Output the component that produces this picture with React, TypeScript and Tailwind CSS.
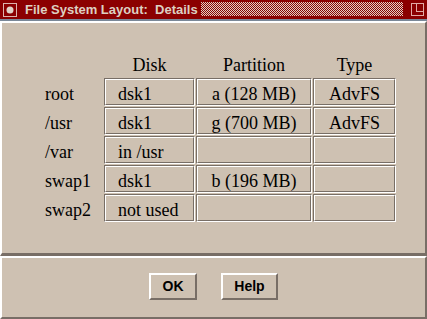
import React from "react"

const rows = [
  ["root", "dsk1", "a (128 MB)", "AdvFS"],
  ["/usr", "dsk1", "g (700 MB)", "AdvFS"],
  ["/var", "in /usr", "", ""],
  ["swap1", "dsk1", "b (196 MB)", ""],
  ["swap2", "not used", "", ""],
]

function Cell({ children, align = "center" }: { children?: React.ReactNode; align?: "left" | "center" }) {
  return (
    <div className="h-[28px] border border-t-[#786e66] border-l-[#786e66] border-b-white border-r-white">
      <div
        className={
          "h-full border border-t-white border-l-white border-b-[#786e66] border-r-[#786e66] pt-[4px] leading-[21px] whitespace-nowrap " +
          (align === "left" ? "pl-[12px] text-left" : "text-center")
        }
      >
        {children}
      </div>
    </div>
  )
}

function TitleBar() {
  return (
    <div className="flex h-[19px] items-start bg-[#8b0000]">
      <svg width="14" height="14" viewBox="0 0 14 14" className="ml-[3px] mt-[3px]" shapeRendering="crispEdges">
        <rect x="0.5" y="0.5" width="13" height="13" fill="none" stroke="#dcb4ac" />
        <circle cx="7" cy="7" r="3.5" fill="#e0d4c8" shapeRendering="auto" />
      </svg>
      <span className="ml-[8px] w-[176px] font-[Liberation_Sans,Arial,sans-serif] text-[13px] font-bold leading-[19px] whitespace-nowrap text-[#ddd0c2]">
        File System Layout:&nbsp; Details
      </span>
      <svg width="202" height="14" className="mt-[2px]" shapeRendering="crispEdges">
        <defs>
          <pattern id="chk" width="2" height="2" patternUnits="userSpaceOnUse">
            <rect width="2" height="2" fill="#8b0000" />
            <rect width="1" height="1" fill="#e0d0c4" />
            <rect x="1" y="1" width="1" height="1" fill="#e0d0c4" />
          </pattern>
        </defs>
        <rect width="202" height="14" fill="url(#chk)" />
      </svg>
      <svg width="13" height="13" viewBox="0 0 13 13" className="ml-[8px] mt-[3px]" shapeRendering="crispEdges">
        <rect x="0.5" y="0.5" width="12" height="12" fill="none" stroke="#e2aaa4" />
        <path d="M5.5 1 V8.5 H12" fill="none" stroke="#e2aaa4" />
      </svg>
    </div>
  )
}

export default function App() {
  return (
    <div className="h-[319px] w-[427px] overflow-hidden bg-[#cec1b2] font-[Liberation_Serif,Times_New_Roman,serif] text-[18px] text-black">
      <TitleBar />
      <div className="h-[2px] bg-[#7a8898]" />
      <div className="h-[235px] border-b-[3px] border-l-2 border-r-2 border-t-2 border-b-[#786e66] border-l-white border-r-[#786e66] border-t-white pl-[43px] pt-[32px]">
        <div className="grid grid-cols-[58px_91px_116px_83px] gap-[1px]">
          <div className="h-[22px]" />
          <div className="h-[22px] text-center leading-[21px]">Disk</div>
          <div className="h-[22px] text-center leading-[21px]">Partition</div>
          <div className="h-[22px] text-center leading-[21px]">Type</div>
          {rows.map(([label, disk, part, type]) => (
            <React.Fragment key={label}>
              <div className="h-[28px] pt-[6px] leading-[21px]">{label}</div>
              <Cell align="left">{disk}</Cell>
              <Cell>{part}</Cell>
              <Cell>{type}</Cell>
            </React.Fragment>
          ))}
        </div>
      </div>
      <div className="flex h-[63px] justify-center gap-6 border-b-2 border-l-2 border-r-2 border-t-2 border-b-[#786e66] border-l-white border-r-[#786e66] border-t-white pt-[15px] font-[Liberation_Sans,Arial,sans-serif]">
        <button className="h-[27px] w-[48px] border-2 border-b-[#786e66] border-l-white border-r-[#786e66] border-t-white text-[14px] font-bold">
          OK
        </button>
        <button className="h-[27px] w-[57px] border-2 border-b-[#786e66] border-l-white border-r-[#786e66] border-t-white text-[14px] font-bold">
          Help
        </button>
      </div>
    </div>
  )
}
